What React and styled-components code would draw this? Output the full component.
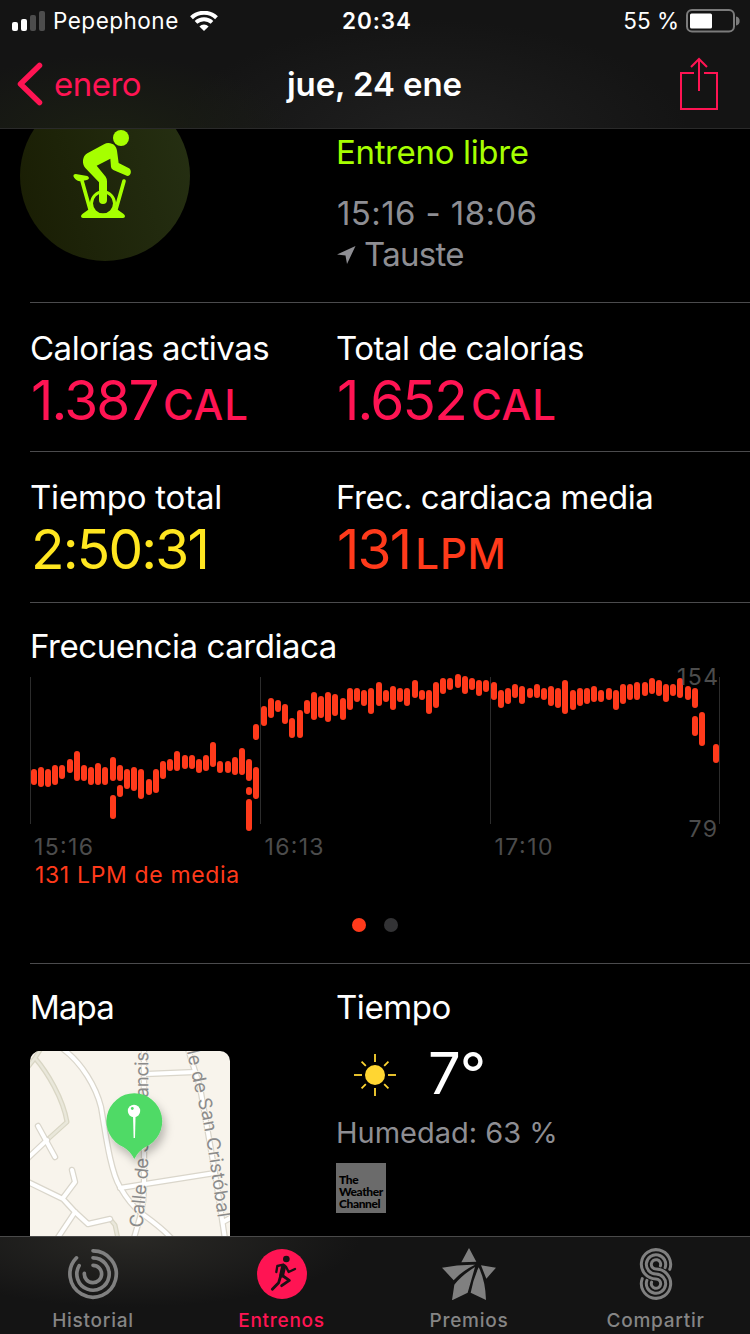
import styled, { createGlobalStyle, css } from "styled-components";

const PINK = "#ff1453";
const ORANGE = "#ff3a1b";
const GREEN = "#a6ff00";
const YELLOW = "#ffe620";
const GRAY = "#8e8e93";

const GlobalStyle = createGlobalStyle`
  * {
    box-sizing: border-box;
  }
  body {
    margin: 0;
    background: #000;
    color: #fff;
    font-family: Inter, "Liberation Sans", sans-serif;
    -webkit-font-smoothing: antialiased;
  }
  svg {
    display: block;
    flex-shrink: 0;
  }
`;

const Screen = styled.div`
  display: flex;
  flex-direction: column;
  width: 750px;
  height: 1334px;
  overflow: hidden;
  background: #000;
`;

const Header = styled.header`
  height: 129px;
  flex-shrink: 0;
  border-bottom: 1px solid #2a2a2a;
  background: radial-gradient(ellipse 190px 80px at 105px 135px, #1b1f13, transparent),
    radial-gradient(ellipse 260px 120px at 430px 140px, #202020, transparent), #141414;
`;

const StatusBar = styled.div`
  display: grid;
  grid-template-columns: 1fr auto 1fr;
  align-items: center;
  height: 40px;
  padding: 2px 10px 0 12px;
  font-size: 22.5px;
  line-height: 38px;
`;

const Carrier = styled.div`
  display: flex;
  align-items: center;
  letter-spacing: 0.5px;

  span {
    margin: 0 11px 0 7px;
  }
`;

const Clock = styled.div`
  font-weight: 600;
  letter-spacing: 0.9px;
  padding-left: 2px;
`;

const Battery = styled.div`
  display: flex;
  align-items: center;
  justify-content: flex-end;
  gap: 7px;
`;

const NavBar = styled.nav`
  display: grid;
  grid-template-columns: 1fr auto 1fr;
  align-items: center;
  height: 88px;
  padding: 0 31px 0 17px;
  font-size: 33px;
`;

const Back = styled.div`
  display: flex;
  align-items: center;
  gap: 11px;
  color: ${PINK};
  letter-spacing: -0.5px;
`;

const Title = styled.h1`
  margin: 0;
  padding-left: 13px;
  font-size: 33px;
  font-weight: 600;
  letter-spacing: -0.1px;
`;

const Share = styled.div`
  justify-self: end;
`;

const Content = styled.main`
  flex: 1;
  min-height: 0;
  overflow: hidden;
`;

const Section = styled.section`
  display: grid;
  grid-template-columns: 306px 1fr;
  align-content: start;
  height: ${(p) => p.$height}px;
  margin-left: 30px;
  padding-top: ${(p) => p.$top || 0}px;
  ${(p) =>
    !p.$last &&
    css`
      border-bottom: 1px solid #4b4b4d;
    `}
`;

const Badge = styled.div`
  width: 170px;
  height: 170px;
  margin: -38px 0 0 -10px;
  border-radius: 50%;
  background: linear-gradient(75deg, #191d03, #263013);
`;

const Summary = styled.div`
  padding-top: 3px;
  font-size: 33px;
  line-height: 41px;
  color: ${GRAY};
`;

const Kind = styled.div`
  margin-bottom: 20px;
  color: ${GREEN};
  letter-spacing: -0.35px;
`;

const Hours = styled.div`
  padding-left: 1px;
  letter-spacing: 0.4px;
`;

const Place = styled.div`
  display: flex;
  align-items: center;
  gap: 8px;
  letter-spacing: -0.7px;
`;

const Label = styled.div`
  font-size: 33px;
  line-height: 40px;
  letter-spacing: ${(p) => p.$spacing ?? -0.45}px;
`;

const Value = styled.div`
  margin-top: 2px;
  padding-left: 1px;
  font-size: 55px;
  line-height: 60px;
  white-space: nowrap;
  color: ${(p) => p.$color};
  letter-spacing: -1.8px;

  small {
    margin-left: 5px;
    font-size: 42px;
    font-weight: 500;
    letter-spacing: 0.8px;
  }
`;

const ChartBlock = styled.div`
  grid-column: 1 / -1;
`;

const Average = styled.div`
  padding-left: 5px;
  font-size: 23px;
  line-height: 26px;
  color: ${ORANGE};
  letter-spacing: 0.65px;
`;

const Dots = styled.div`
  display: flex;
  gap: 18px;
  margin: 30px 0 0 322px;
`;

const Dot = styled.i`
  width: 14px;
  height: 14px;
  border-radius: 50%;
  background: ${(p) => (p.$active ? ORANGE : "#333335")};
`;

const MapCard = styled.div`
  width: 200px;
  height: 200px;
  margin-top: 24px;
  border-radius: 10px;
  overflow: hidden;
  background: #f8f4ec;
`;

const Weather = styled.div`
  display: flex;
  align-items: center;
  gap: 32px;
  height: 60px;
  margin-top: 18px;
  padding-left: 18px;
`;

const Temperature = styled.span`
  padding-bottom: 4px;
  font-size: 58px;
  line-height: 60px;
  letter-spacing: -1px;
`;

const Humidity = styled.div`
  margin-top: 9px;
  font-size: 29px;
  line-height: 38px;
  color: ${GRAY};
`;

const Provider = styled.div`
  display: flex;
  flex-direction: column;
  justify-content: flex-end;
  width: 50px;
  height: 50px;
  margin-top: 11px;
  padding: 0 0 3px 3px;
  background: #6b6b6b;
  color: #000;
  font: 900 12px/12px Lato, "Noto Sans", sans-serif;
  letter-spacing: -0.4px;
`;

const TabBar = styled.footer`
  display: grid;
  grid-template-columns: 186px 191px 184px 189px;
  height: 98px;
  flex-shrink: 0;
  border-top: 1px solid #4a4a4a;
  background: radial-gradient(ellipse 230px 70px at 130px 0, #2a2926, transparent), #141414;
`;

const Tab = styled.div`
  display: flex;
  flex-direction: column;
  align-items: center;
  padding-top: 11px;
  font-size: 19px;
  line-height: 24px;
  font-weight: 500;
  letter-spacing: 0.75px;
  color: ${(p) => (p.$active ? PINK : "#858585")};

  svg {
    margin-bottom: 9px;
  }
`;

function Signal() {
  return (
    <svg width="34" height="20" viewBox="0 0 34 20" fill="#fff">
      <rect x="0" y="11" width="6" height="9" rx="2" />
      <rect x="9" y="8" width="6" height="12" rx="2" />
      <rect x="18" y="4" width="6" height="16" rx="2" fill="#4d4d4d" />
      <rect x="27" y="0" width="6" height="20" rx="2" fill="#4d4d4d" />
    </svg>
  );
}

function Wifi() {
  return (
    <svg width="28" height="20" viewBox="0 0 28 20" fill="none" stroke="#fff">
      <path d="M1.5 6.8a18 18 0 0 1 25 0" strokeWidth="4" />
      <path d="M6 11.4a11.7 11.7 0 0 1 16 0" strokeWidth="3.8" />
      <path d="M14 20l-4.6-4.6a6.6 6.6 0 0 1 9.2 0z" fill="#fff" stroke="none" />
    </svg>
  );
}

function BatteryIcon() {
  return (
    <svg width="54" height="24" viewBox="0 0 54 24">
      <rect x="1" y="1" width="47" height="21.5" rx="5" fill="none" stroke="#7b7b7b" strokeWidth="2" />
      <rect x="4" y="4.5" width="22" height="15" rx="1.5" fill="#fff" />
      <path d="M50 7.5a4.6 4.6 0 0 1 0 9z" fill="#7b7b7b" />
    </svg>
  );
}

function ShareIcon() {
  return (
    <svg width="40" height="54" viewBox="0 0 40 54" fill="none" stroke={PINK} strokeWidth="2">
      <path d="M15 16H2v36h36V16H25M20 34V2M12 10l8-8 8 8" />
    </svg>
  );
}

function Bike() {
  return (
    <svg width="170" height="170" viewBox="60 -87 510 510" fill={GREEN} stroke="none">
      <path d="M243 289q0-5 5-8l20-14h82l20 14q5 3 5 8 0 5-6 5H249q-6 0-6-5z" />
      <circle cx="309" cy="250" r="34.5" fill="#1f260d" stroke={GREEN} strokeWidth="9" />
      <path d="M246 182l24 86M372 183l-24 85" stroke={GREEN} strokeWidth="11" strokeLinecap="round" />
      <path d="M220 168q0-6 7-6l35 6q5 2 5 7-1 5-9 6l-20 3q-14-4-18-16z" />
      <circle cx="363" cy="54" r="24" />
      <path d="M325 69c15 0 25 11 26 23l5 37 31 16c9 5 7 23-5 23l-42-18q-6-3-7-9l-2-25-41 21 27 33q4 6 4 14v56a12 12 0 0 1-24 0v-53l-41-43c-11-12-9-36 6-44l50-27q6-4 13-4z" />
    </svg>
  );
}

function Arrow() {
  return (
    <svg width="20" height="20" viewBox="0 0 20 20" fill={GRAY}>
      <path d="M19.500 1L1 9.500l8.500 1L11 19z" />
    </svg>
  );
}

// [x, top, bottom] of every heart rate range
const BARS = [
  [4, 109, 125], [11, 107, 127], [18, 109, 127], [25, 105, 125], [32, 105, 119], [40, 99, 113],
  [47, 91, 121], [54, 105, 121], [61, 107, 125], [68, 103, 125], [75, 107, 125], [83, 97, 121],
  [83, 135, 159], [90, 105, 121], [90, 125, 137], [97, 109, 129], [104, 107, 131], [111, 109, 139],
  [119, 119, 135], [126, 109, 133], [133, 101, 119], [140, 99, 111], [147, 91, 111], [155, 95, 109],
  [162, 95, 109], [169, 99, 113], [176, 95, 111], [183, 82, 107], [190, 101, 113], [198, 101, 113],
  [205, 97, 115], [212, 88, 115], [219, 99, 121], [219, 127, 135], [219, 139, 171], [226, 64, 80],
  [226, 107, 139], [234, 46, 66], [241, 38, 58], [248, 40, 52], [255, 44, 64], [262, 58, 78],
  [270, 50, 78], [277, 40, 54], [284, 32, 60], [291, 36, 58], [298, 32, 62], [305, 34, 56],
  [313, 38, 60], [320, 28, 50], [327, 28, 42], [334, 30, 46], [341, 28, 54], [349, 22, 46],
  [356, 30, 42], [363, 26, 50], [370, 28, 42], [377, 28, 46], [385, 20, 38], [392, 30, 40],
  [399, 30, 54], [406, 22, 48], [413, 18, 34], [420, 18, 30], [428, 14, 28], [435, 16, 34],
  [442, 18, 30], [449, 20, 36], [456, 20, 32], [464, 22, 40], [471, 30, 48], [478, 28, 44],
  [485, 24, 38], [492, 26, 44], [500, 28, 38], [507, 24, 38], [514, 28, 40], [521, 26, 46],
  [528, 28, 48], [535, 20, 54], [543, 30, 50], [550, 28, 46], [557, 28, 44], [564, 26, 42],
  [571, 30, 42], [579, 28, 40], [586, 30, 50], [593, 24, 44], [600, 24, 40], [607, 22, 40],
  [615, 22, 36], [622, 18, 34], [629, 20, 36], [636, 24, 42], [643, 24, 36], [650, 18, 38],
  [658, 26, 40], [665, 28, 48], [665, 56, 76], [672, 52, 86], [686, 84, 103],
];

const Chart = styled.svg`
  overflow: visible;
  font-size: 23px;
  fill: #4c4c4c;
`;

function HeartChart() {
  return (
    <Chart width="720" height="196" viewBox="0 6 720 196">
      {[0, 230, 460, 689].map((x) => (
        <rect key={x} x={x} y="17" width="1" height="147" fill="#2c2c2c" />
      ))}
      {BARS.map(([x, top, bottom]) => (
        <rect key={`${x}-${top}`} x={x - 3} y={top} width="6" height={bottom - top} rx="3" fill={ORANGE} />
      ))}
      <text x="4" y="195" textLength="59">15:16</text>
      <text x="234.5" y="195" textLength="59">16:13</text>
      <text x="464.5" y="195" textLength="58">17:10</text>
      <text x="647" y="25" textLength="41">154</text>
      <text x="658.5" y="177" textLength="28.5">79</text>
    </Chart>
  );
}

const STREETS = [
  "M33-2C52 12 66 36 71 56c4 22 9 64 19 80 8 14 16 22 21 26 11 8 21 15 30 25",
  "M114-2v138q0 14-3 27l-7 24",
  "M158-2l12 38 15 86 10 66",
  "M116 23l49-2",
  "M90 137l95-15",
  "M193 171l9-5",
  "M17 89L-2 107",
  "M8 75l17 31",
  "M-2 131l35 17 12 13 13 12 22-5",
  "M42 119l3 12-12 16",
  "M45 161l-18 27",
];

const TRACKS = ["M12-4L5 7l-7 9M5 7c12 14 28 40 32 64L17 89", "M80 168l5 6 3 14"];

function TownMap() {
  return (
    <svg width="200" height="200" viewBox="0 0 200 200" fill="none" strokeLinecap="round" strokeLinejoin="round">
      <defs>
        <path id="francisco" d="M112.500 177L118 120 118.500 -60" />
        <path id="cristobal" d="M149-32L158 6 165 39 172 65 177 92 188 167 192 200" />
        <filter id="shade" x="-50%" y="-50%" width="200%" height="200%">
          <feDropShadow dx="3" dy="6" stdDeviation="4" floodOpacity="0.25" />
        </filter>
      </defs>
      {TRACKS.map((d) => (
        <g key={d}>
          <path d={d} stroke="#d9d6c4" strokeWidth="5" />
          <path d={d} stroke="#e9e7da" strokeWidth="2.500" />
        </g>
      ))}
      {STREETS.map((d) => (
        <path key={d} d={d} stroke="#dad6cb" strokeWidth="6.500" />
      ))}
      {STREETS.map((d) => (
        <path key={d} d={d} stroke="#fff" strokeWidth="4" />
      ))}
      <g fill="#8b8b8b" stroke="#f8f4ec" strokeWidth="1.500" paintOrder="stroke" fontSize="18.500">
        <text>
          <textPath href="#francisco" textLength="198">Calle de San Francisco</textPath>
        </text>
        <text>
          <textPath href="#cristobal" startOffset="4" textLength="199">Calle de San Cristóbal</textPath>
        </text>
      </g>
      <path
        d="M104.300 42.300a28 28 0 0 1 11 53.700q-7 4-11 12-4-8-11-12a28 28 0 0 1 11-53.700z"
        fill="#4fda66"
        filter="url(#shade)"
      />
      <path d="M103 64h2.600l-.6 23h-1.400z" fill="#fff" />
      <circle cx="104" cy="60" r="6.200" fill="#fff" />
      <circle cx="102.300" cy="57.500" r="1.400" fill="#4fda66" />
    </svg>
  );
}

function Sun() {
  return (
    <svg width="42" height="42" viewBox="-21 -21 42 42" fill="#ffd632" stroke="#ffd632" strokeWidth="1.800">
      <circle r="10" stroke="none" />
      {[0, 90, 180, 270].map((a) => (
        <path key={a} d="M0-21v8" transform={`rotate(${a})`} />
      ))}
      {[45, 135, 225, 315].map((a) => (
        <path key={a} d="M0-19v6" transform={`rotate(${a})`} />
      ))}
    </svg>
  );
}

function Rings() {
  return (
    <svg width="52" height="52" viewBox="81 36 156 156" fill="none" stroke="#808080" strokeWidth="11" strokeLinecap="round">
      <path d="M159 44.500A69.500 69.500 0 1 1 109.500 65.500" />
      <path d="M159 65.500A48.500 48.500 0 1 1 117.500 89" />
      <path d="M159 88A26 26 0 1 1 133 112" />
    </svg>
  );
}

function Runner() {
  return (
    <svg width="52" height="52" viewBox="648 36 156 156" fill="none" stroke="#1a1114" strokeLinecap="round" strokeLinejoin="round">
      <circle cx="726" cy="114" r="75" fill={PINK} stroke="none" />
      <circle cx="739" cy="69" r="10" fill="#1a1114" stroke="none" />
      <path d="M730 86l-18 4-3 18M738 92l8 16 19-9" strokeWidth="7" />
      <path d="M731 91l-6 26" strokeWidth="15" />
      <path d="M729 120l19 13-23 16M722 120l-6 20-19 20" strokeWidth="8.500" />
    </svg>
  );
}

function Star() {
  return (
    <svg width="56" height="52" viewBox="93 38 168 156" fill="#808080">
      <path d="M177 38l22 41-45 2zM96 97q50-10 99-9-38 18-64 47zM213 90l45 7-29 33zM195 95q-40 25-62 53l-7 47 47-23zM206 96q-16 34-24 76l46 22q-2-60-22-98z" />
    </svg>
  );
}

function Fitness() {
  const arms = [44, 29, 14];
  const cos = Math.cos(Math.PI / 9);
  const sin = Math.sin(Math.PI / 9);
  return (
    <svg width="52" height="52" viewBox="660 36 156 156" fill="none" stroke="#808080" strokeWidth="9" strokeLinecap="round">
      {arms.map((r) => {
        const s = 58 - r;
        return (
          <path
            key={r}
            d={`M${738 + r * cos} ${85 + r * sin}A${r} ${r} 0 1 0 738 ${85 + r}A${s} ${s} 0 1 1 ${738 - s * cos} ${143 - s * sin}`}
          />
        );
      })}
    </svg>
  );
}

export default function App() {
  return (
    <Screen>
      <GlobalStyle />
      <Header>
        <StatusBar>
          <Carrier>
            <Signal />
            <span>Pepephone</span>
            <Wifi />
          </Carrier>
          <Clock>20:34</Clock>
          <Battery>
            <span>55 %</span>
            <BatteryIcon />
          </Battery>
        </StatusBar>
        <NavBar>
          <Back>
            <svg width="26" height="44" viewBox="0 0 26 44" fill="none" stroke={PINK} strokeWidth="5.500" strokeLinecap="round" strokeLinejoin="round">
              <path d="M22.500 3.500L3.500 22l19 18.500" />
            </svg>
            enero
          </Back>
          <Title>jue, 24 ene</Title>
          <Share>
            <ShareIcon />
          </Share>
        </NavBar>
      </Header>

      <Content>
        <Section $height={174}>
          <Badge>
            <Bike />
          </Badge>
          <Summary>
            <Kind>Entreno libre</Kind>
            <Hours>15:16 - 18:06</Hours>
            <Place>
              <Arrow />
              Tauste
            </Place>
          </Summary>
        </Section>

        <Section $height={149} $top={25}>
          <div>
            <Label $spacing={-0.5}>Calorías activas</Label>
            <Value $color={PINK}>
              1.387<small>CAL</small>
            </Value>
          </div>
          <div>
            <Label $spacing={-0.5}>Total de calorías</Label>
            <Value $color={PINK}>
              1.652<small>CAL</small>
            </Value>
          </div>
        </Section>

        <Section $height={151} $top={25}>
          <div>
            <Label $spacing={-0.2}>Tiempo total</Label>
            <Value $color={YELLOW}>2:50:31</Value>
          </div>
          <div>
            <Label $spacing={-0.4}>Frec. cardiaca media</Label>
            <Value $color={ORANGE}>
              131<small>LPM</small>
            </Value>
          </div>
        </Section>

        <Section $height={361} $top={23}>
          <ChartBlock>
            <Label>Frecuencia cardiaca</Label>
            <HeartChart />
            <Average>131 LPM de media</Average>
            <Dots>
              <Dot $active />
              <Dot />
            </Dots>
          </ChartBlock>
        </Section>

        <Section $height={290} $top={23} $last>
          <div>
            <Label $spacing={-0.9}>Mapa</Label>
            <MapCard>
              <TownMap />
            </MapCard>
          </div>
          <div>
            <Label>Tiempo</Label>
            <Weather>
              <Sun />
              <Temperature>7°</Temperature>
            </Weather>
            <Humidity>Humedad: 63 %</Humidity>
            <Provider>
              <span>The</span>
              <span>Weather</span>
              <span>Channel</span>
            </Provider>
          </div>
        </Section>
      </Content>

      <TabBar>
        <Tab>
          <Rings />
          Historial
        </Tab>
        <Tab $active>
          <Runner />
          Entrenos
        </Tab>
        <Tab>
          <Star />
          Premios
        </Tab>
        <Tab>
          <Fitness />
          Compartir
        </Tab>
      </TabBar>
    </Screen>
  );
}
